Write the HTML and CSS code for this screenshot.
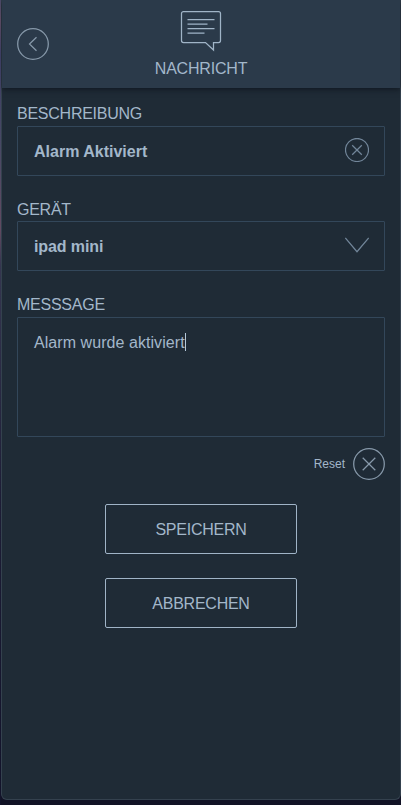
FILE: index.html
```html
<!DOCTYPE html>
<html lang="de">
<head>
<meta charset="utf-8">
<title>Nachricht</title>
<link rel="stylesheet" href="styles.css">
</head>
<body>
<main class="window">
  <header class="header">
    <svg class="back" width="32" height="32" viewBox="0 0 32 32"><circle cx="16" cy="16" r="15.3"/><path d="M19.5 9.2 12.5 16l7 6.8"/></svg>
    <div class="heading">
      <svg class="message" width="42" height="42" viewBox="0 0 42 42"><path d="M3.5 1.5h35a2 2 0 0 1 2 2v27a2 2 0 0 1-2 2h-5v7.5l-8-7.5h-22a2 2 0 0 1-2-2v-27a2 2 0 0 1 2-2z"/><path d="M7.5 9.5h27M7.5 14.1h20M7.5 18.5h27M7.5 23h17"/></svg>
      <h1 class="title">NACHRICHT</h1>
    </div>
  </header>
  <section class="form">
    <div class="label">BESCHREIBUNG</div>
    <div class="field">
      <span class="value">Alarm Aktiviert</span>
      <svg class="clear" width="24" height="24" viewBox="0 0 24 24"><circle cx="12" cy="12" r="11.5"/><path d="m7.2 7.2 9.6 9.6M16.8 7.2l-9.6 9.6"/></svg>
    </div>
    <div class="label label-device">GERÄT</div>
    <div class="field field-device">
      <span class="value">ipad mini</span>
      <svg class="chevron" width="24" height="16" viewBox="0 0 24 16"><path d="M.3 1 12 14.7 23.7 1"/></svg>
    </div>
    <div class="label">MESSSAGE</div>
    <div class="field area"><span class="text">Alarm wurde aktiviert</span><span class="caret"></span></div>
    <div class="reset">
      <span class="reset-text">Reset</span>
      <svg width="32" height="32" viewBox="0 0 32 32"><circle cx="16" cy="16" r="15.3"/><path d="m9.7 9.7 12.6 12.6M22.3 9.7 9.7 22.3"/></svg>
    </div>
    <div class="actions">
      <div class="button save">SPEICHERN</div>
      <div class="button cancel">ABBRECHEN</div>
    </div>
  </section>
</main>
</body>
</html>
```
FILE: styles.css
```css
* { box-sizing: border-box; }
body {
  margin: 0;
  height: 805px;
  overflow: hidden;
  padding: 0 0 5px 1px;
  background: linear-gradient(#494765 0, #5a4961 20px, #3c3d62 55px, #484965 145px, #614a61 230px, #353650 265px, #1d1d36 500px, #12132a 800px);
  font: 16px/20px "Liberation Sans", Arial, sans-serif;
  color: #a3b7ca;
}
.window {
  width: 400px;
  height: 800px;
  background: #1f2b36;
  border: 1px solid #34414e;
  border-top: 0;
  border-radius: 0 0 6px 6px;
  box-shadow: 0 5px 0 6px #111225;
  clip-path: inset(0 0 -5px 0);
}
.header {
  height: 88px;
  padding: 0 15px;
  display: grid;
  grid-template-columns: 32px 1fr 32px;
  background: #2b3a4a;
  box-shadow: 0 1px 6px rgba(10, 14, 22, .75);
}
svg { display: block; flex: none; fill: none; stroke: #8799aa; stroke-width: 1.25; }
.back { margin-top: 28px; }
.heading { display: flex; flex-direction: column; align-items: center; padding-top: 10px; }
.message { stroke: #a0b4c7; stroke-width: 1.25; }
.title { margin: 7px 0 0; font-size: 16px; font-weight: 400; letter-spacing: -.2px; }
.form { padding: 15px 15px 0; }
.label { height: 23px; padding-top: 1px; letter-spacing: -.25px; }
.label-device { padding-top: 2px; }
.field {
  height: 50px;
  margin-bottom: 22px;
  padding: 0 15px 0 16px;
  display: flex;
  align-items: center;
  justify-content: space-between;
  border: 1px solid #33475a;
  border-radius: 1px;
}
.field-device { margin-bottom: 23px; }
.value { padding-top: 2px; font-weight: 700; }
.field-device .value { letter-spacing: -.1px; }
.clear, .chevron { stroke: #72869a; }
.clear { margin-top: -2px; }
.chevron { margin-top: -2px; }
.area { height: 120px; margin-bottom: 11px; align-items: flex-start; justify-content: flex-start; padding-top: 15px; }
.text { letter-spacing: .06px; }
.caret { width: 1px; height: 18px; background: #b5c8da; }
.reset { display: flex; justify-content: flex-end; align-items: center; gap: 8px; height: 32px; }
.reset-text { font-size: 12px; }
.actions { display: flex; flex-direction: column; align-items: center; gap: 24px; margin-top: 24px; }
.button {
  width: 192px;
  height: 50px;
  padding-top: 2px;
  display: flex;
  align-items: center;
  justify-content: center;
  border: 1px solid #a0b4c7;
  border-radius: 2px;
  letter-spacing: -.25px;
}
```
